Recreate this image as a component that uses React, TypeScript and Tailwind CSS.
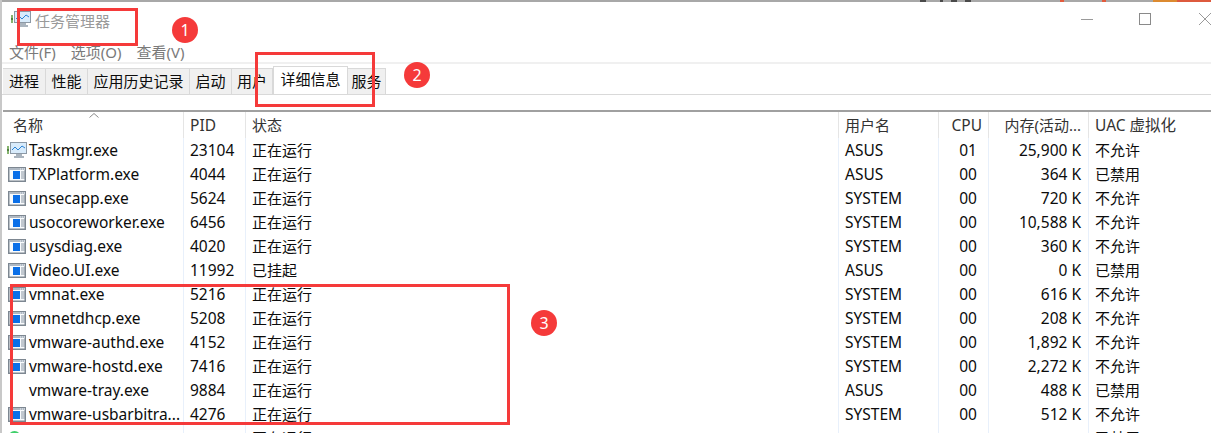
const rows = [
  { name: "Taskmgr.exe", pid: "23104", status: "正在运行", user: "ASUS", cpu: "01", mem: "25,900 K", uac: "不允许", icon: "task" },
  { name: "TXPlatform.exe", pid: "4044", status: "正在运行", user: "ASUS", cpu: "00", mem: "364 K", uac: "已禁用", icon: "win" },
  { name: "unsecapp.exe", pid: "5624", status: "正在运行", user: "SYSTEM", cpu: "00", mem: "720 K", uac: "不允许", icon: "win" },
  { name: "usocoreworker.exe", pid: "6456", status: "正在运行", user: "SYSTEM", cpu: "00", mem: "10,588 K", uac: "不允许", icon: "win" },
  { name: "usysdiag.exe", pid: "4020", status: "正在运行", user: "SYSTEM", cpu: "00", mem: "360 K", uac: "不允许", icon: "win" },
  { name: "Video.UI.exe", pid: "11992", status: "已挂起", user: "ASUS", cpu: "00", mem: "0 K", uac: "已禁用", icon: "win" },
  { name: "vmnat.exe", pid: "5216", status: "正在运行", user: "SYSTEM", cpu: "00", mem: "616 K", uac: "不允许", icon: "win" },
  { name: "vmnetdhcp.exe", pid: "5208", status: "正在运行", user: "SYSTEM", cpu: "00", mem: "208 K", uac: "不允许", icon: "win" },
  { name: "vmware-authd.exe", pid: "4152", status: "正在运行", user: "SYSTEM", cpu: "00", mem: "1,892 K", uac: "不允许", icon: "win" },
  { name: "vmware-hostd.exe", pid: "7416", status: "正在运行", user: "SYSTEM", cpu: "00", mem: "2,272 K", uac: "不允许", icon: "win" },
  { name: "vmware-tray.exe", pid: "9884", status: "正在运行", user: "ASUS", cpu: "00", mem: "488 K", uac: "已禁用", icon: "none" },
  { name: "vmware-usbarbitra...", pid: "4276", status: "正在运行", user: "SYSTEM", cpu: "00", mem: "512 K", uac: "不允许", icon: "win" },
  { name: "", pid: "", status: "正在运行", user: "", cpu: "", mem: "", uac: "已禁用", icon: "green" },
];

const tabs = [
  { label: "进程", w: "w-[43px]" },
  { label: "性能", w: "w-[42px]" },
  { label: "应用历史记录", w: "w-[102px]" },
  { label: "启动", w: "w-[42px]" },
  { label: "用户", w: "w-[41px]" },
];

const gridCols = "grid grid-cols-[181px_62px_593px_100px_50px_100px_1fr]";

function WinIcon() {
  return (
    <svg width="18" height="15" viewBox="0 0 18 15" className="shrink-0">
      <rect x="0.75" y="0.75" width="16.5" height="13.5" fill="#f9fbfd" stroke="#7d8791" strokeWidth="1.5" />
      <rect x="1" y="1" width="16" height="2" fill="#aeb8c3" />
      <path d="M12 2h1M14 2h1M16 2h1" stroke="#eef1f4" />
      <rect x="5" y="4" width="7" height="8" fill="#0a6fe8" />
      <path d="M13 5h4M13 7h4M13 9h4M13 11h4" stroke="#8a96a3" />
    </svg>
  );
}

function TaskIcon() {
  return (
    <svg width="20" height="16" viewBox="0 0 20 16" className="shrink-0">
      <rect x="0" y="4" width="2" height="8" fill="#86b46f" />
      <rect x="0" y="7" width="2" height="2" fill="#4f7f3f" />
      <rect x="3.5" y="0.5" width="16" height="11" fill="#d8ebfb" stroke="#8c99a6" />
      <path d="M5 8l3-3 3 3 4-4 3 2" fill="none" stroke="#2b83d6" />
      <path d="M9 12h6v2h2v2H7v-2h2z" fill="#aab4be" />
    </svg>
  );
}

function RowIcon({ kind }: { kind: string }) {
  if (kind === "task") return <span className="-mx-px flex shrink-0"><TaskIcon /></span>;
  if (kind === "win") return <WinIcon />;
  if (kind === "green") {
    return <span className="mt-[5px] mr-[5px] block size-[13px] shrink-0 self-start rounded-full bg-[#3fcf6a]" />;
  }
  return <span className="w-[18px] shrink-0" />;
}

function Badge({ n, className }: { n: number; className: string }) {
  return (
    <div className={`absolute flex size-[26px] items-center justify-center rounded-full bg-[#f53a3a] text-[16px] text-white ${className}`}>
      {n}
    </div>
  );
}

export default function App() {
  return (
    <div
      className="relative h-[433px] w-[1211px] overflow-hidden bg-white text-[15px] text-[#0c0c0c]"
      style={{ fontFamily: '"Noto Sans", "Noto Sans CJK SC", sans-serif' }}
    >
      {/* desktop sliver above the window */}
      <div className="flex h-[2px] bg-[#a8a8a8]">
        <div className="w-[920px]" />
        <div className="w-[6px] bg-[#4a4a4a]" />
        <div className="w-[14px]" />
        <div className="w-[3px] bg-[#4a4a4a]" />
        <div className="w-[8px]" />
        <div className="w-[6px] bg-[#4a4a4a]" />
        <div className="w-[8px]" />
        <div className="w-[6px] bg-[#4a4a4a]" />
        <div className="flex-1" />
        <div className="w-[4px] bg-[#e25b3c]" />
        <div className="w-[38px]" />
        <div className="w-[4px] bg-[#e25b3c]" />
        <div className="w-[47px]" />
        <div className="w-[24px] bg-[#dc8a30]" />
        <div className="w-[34px] bg-[#dd5a3e]" />
      </div>

      <div className="flex h-[41px] items-start pl-[11px] pt-[9px]">
        <TaskIcon />
        <span className="ml-[4px] text-[15px] leading-[20px] text-[#9a9a9a]">任务管理器</span>
        <div className="ml-auto flex items-center pt-px">
          <div className="h-px w-[12px] bg-[#9a9a9a]" />
          <div className="ml-[46px] size-[12px] border border-[#8a8a8a]" />
          <svg width="13" height="14" viewBox="0 0 13 14" className="ml-[47px]">
            <path d="M1 1l12 12M13 1L1 13" stroke="#9a9a9a" strokeWidth="1" />
          </svg>
        </div>
      </div>

      <div className="flex h-[19px] items-center gap-[15px] pl-[9px] text-[#7a7a7a]">
        <span>文件(F)</span>
        <span>选项(O)</span>
        <span>查看(V)</span>
      </div>

      <div className="h-[2px] bg-[#f0f0f0]" />

      <div className="flex h-[31px] items-end border-b border-[#d9d9d9] pl-[3px]">
        {tabs.map((t) => (
          <div
            key={t.label}
            className={`flex h-[26px] items-center justify-center border-t border-r border-[#d9d9d9] bg-[#f0f0f0] ${t.w}`}
          >
            {t.label}
          </div>
        ))}
        <div className="flex h-[28px] w-[75px] items-center justify-center border-x border-t border-[#d9d9d9] bg-white pb-[2px]">
          详细信息
        </div>
        <div className="flex h-[26px] w-[38px] items-center justify-center border-t border-r border-[#d9d9d9] bg-[#f0f0f0]">
          服务
        </div>
      </div>

      <div className="h-[15px]" />

      <div className="pl-[3px]">
        <div className={`${gridCols} relative h-[28px] border-t-2 border-[#a0a0a0] leading-[26px] text-[#333]`}>
          <div className="border-r border-[#e5e5e5] pl-[10px]">名称</div>
          <div className="border-r border-[#e5e5e5] pl-[6px] text-[15.5px]">PID</div>
          <div className="border-r border-[#e5e5e5] pl-[6px]">状态</div>
          <div className="border-r border-[#e5e5e5] pl-[6px]">用户名</div>
          <div className="border-r border-[#e5e5e5] pr-[6px] text-right text-[15.5px]">CPU</div>
          <div className="border-r border-[#e5e5e5] pr-[7px] text-right">内存(活动...</div>
          <div className="pl-[6px] text-[15.5px]">UAC 虚拟化</div>
          <svg width="12" height="6" viewBox="0 0 12 6" className="absolute left-[85px] top-0">
            <path d="M1.5 5.5l4.5-4 4.5 4" fill="none" stroke="#8a8a8a" />
          </svg>
        </div>

        {rows.map((r, i) => (
          <div key={i} className={`${gridCols} h-[24px] leading-[24px]`}>
            <div className="flex items-center border-r border-[#e8f0fb] pl-[5px]">
              <RowIcon kind={r.icon} />
              <span className="ml-[3px] whitespace-nowrap text-[15.5px]">{r.name}</span>
            </div>
            <div className="border-r border-[#e8f0fb] pl-[6px] text-[15.5px]">{r.pid}</div>
            <div className="border-r border-[#e8f0fb] pl-[6px]">{r.status}</div>
            <div className="border-r border-[#e8f0fb] pl-[6px] text-[15.5px]">{r.user}</div>
            <div className="border-r border-[#e8f0fb] pl-[9px] text-center text-[15.5px]">{r.cpu}</div>
            <div className="border-r border-[#e8f0fb] pr-[7px] text-right text-[15.5px]">{r.mem}</div>
            <div className="pl-[6px]">{r.uac}</div>
          </div>
        ))}
      </div>

      {/* window edge and annotations pasted over the screenshot */}
      <div className="absolute inset-y-0 left-0 w-[2px] bg-[#c8c8c8]" />
      <div className="absolute left-[17px] top-[8px] h-[38px] w-[121px] border-[3px] border-[#f53a3a]" />
      <div className="absolute left-[255px] top-[52px] h-[55px] w-[120px] border-[3px] border-[#f53a3a]" />
      <div className="absolute left-[10px] top-[284px] h-[141px] w-[500px] border-[3px] border-[#f53a3a]" />
      <Badge n={1} className="left-[172px] top-[17px]" />
      <Badge n={2} className="left-[404px] top-[62px]" />
      <Badge n={3} className="left-[531px] top-[310px]" />
    </div>
  );
}
